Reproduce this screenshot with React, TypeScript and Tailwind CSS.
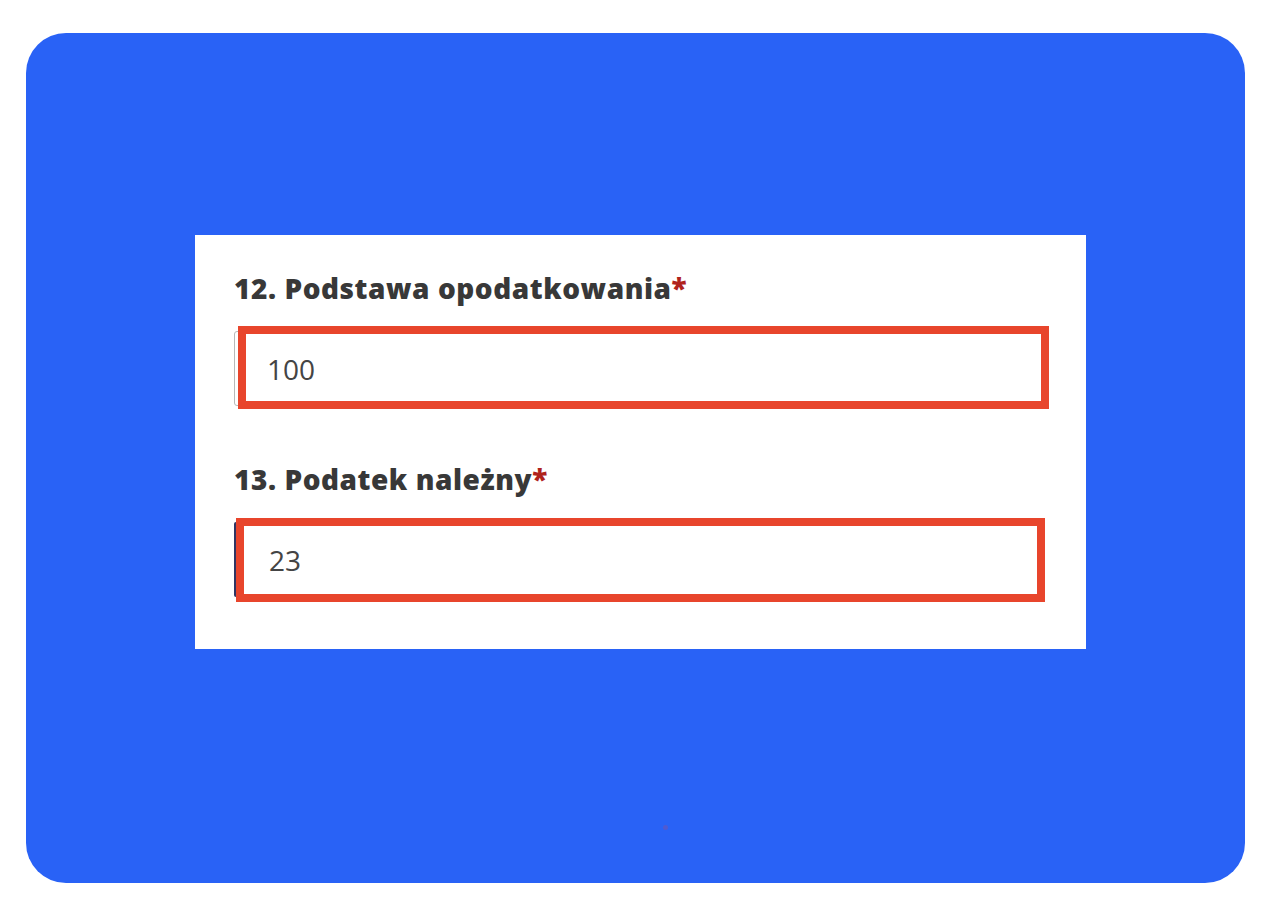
import React from 'react';

const fields = [
  { id: 12, label: 'Podstawa opodatkowania', value: '100', mark: 'left-[4px] -top-[5px] w-[811px] h-[83px]', edge: 'border border-[#b8b8b8] rounded-[3px]' },
  { id: 13, label: 'Podatek należny', value: '23', mark: 'left-[2px] -top-[4px] w-[809px] h-[84px]', edge: 'border-l-[3px] border-[#2f3563] rounded-l-[2px]' },
];

export default function App() {
  return (
    <div className="min-h-[910px] w-[1280px] bg-white pl-[26px] pt-[33px]" style={{ fontFamily: '"Open Sans", "Liberation Sans", sans-serif' }}>
      <div className="relative w-[1219px] h-[850px] rounded-[40px] bg-[#2962f6] pl-[169px] pt-[202px]">
        <div className="w-[891px] h-[414px] bg-white pl-[39px] pt-[33px]">
          {fields.map((f, i) => (
            <div key={f.id} className={i > 0 ? 'mt-[53px]' : ''}>
              <label className="block h-[40px] leading-[40px] text-[28px] font-extrabold text-[#383838] tracking-[0.55px]">
                {f.id}. {f.label}
                <span className="text-[#b0231c]">*</span>
              </label>
              <div className="relative mt-[23px] w-[813px]">
                <div className={`h-[75px] flex items-center pl-[32px] text-[28px] text-[#444] ${f.edge}`}>
                  {f.value}
                </div>
                <div className={`absolute border-[8px] border-[#e8452c] ${f.mark}`} />
              </div>
            </div>
          ))}
        </div>
        <div className="absolute left-[637px] top-[792px] w-[5px] h-[5px] rounded-full bg-[#6a55b8] opacity-60" />
      </div>
    </div>
  );
}
